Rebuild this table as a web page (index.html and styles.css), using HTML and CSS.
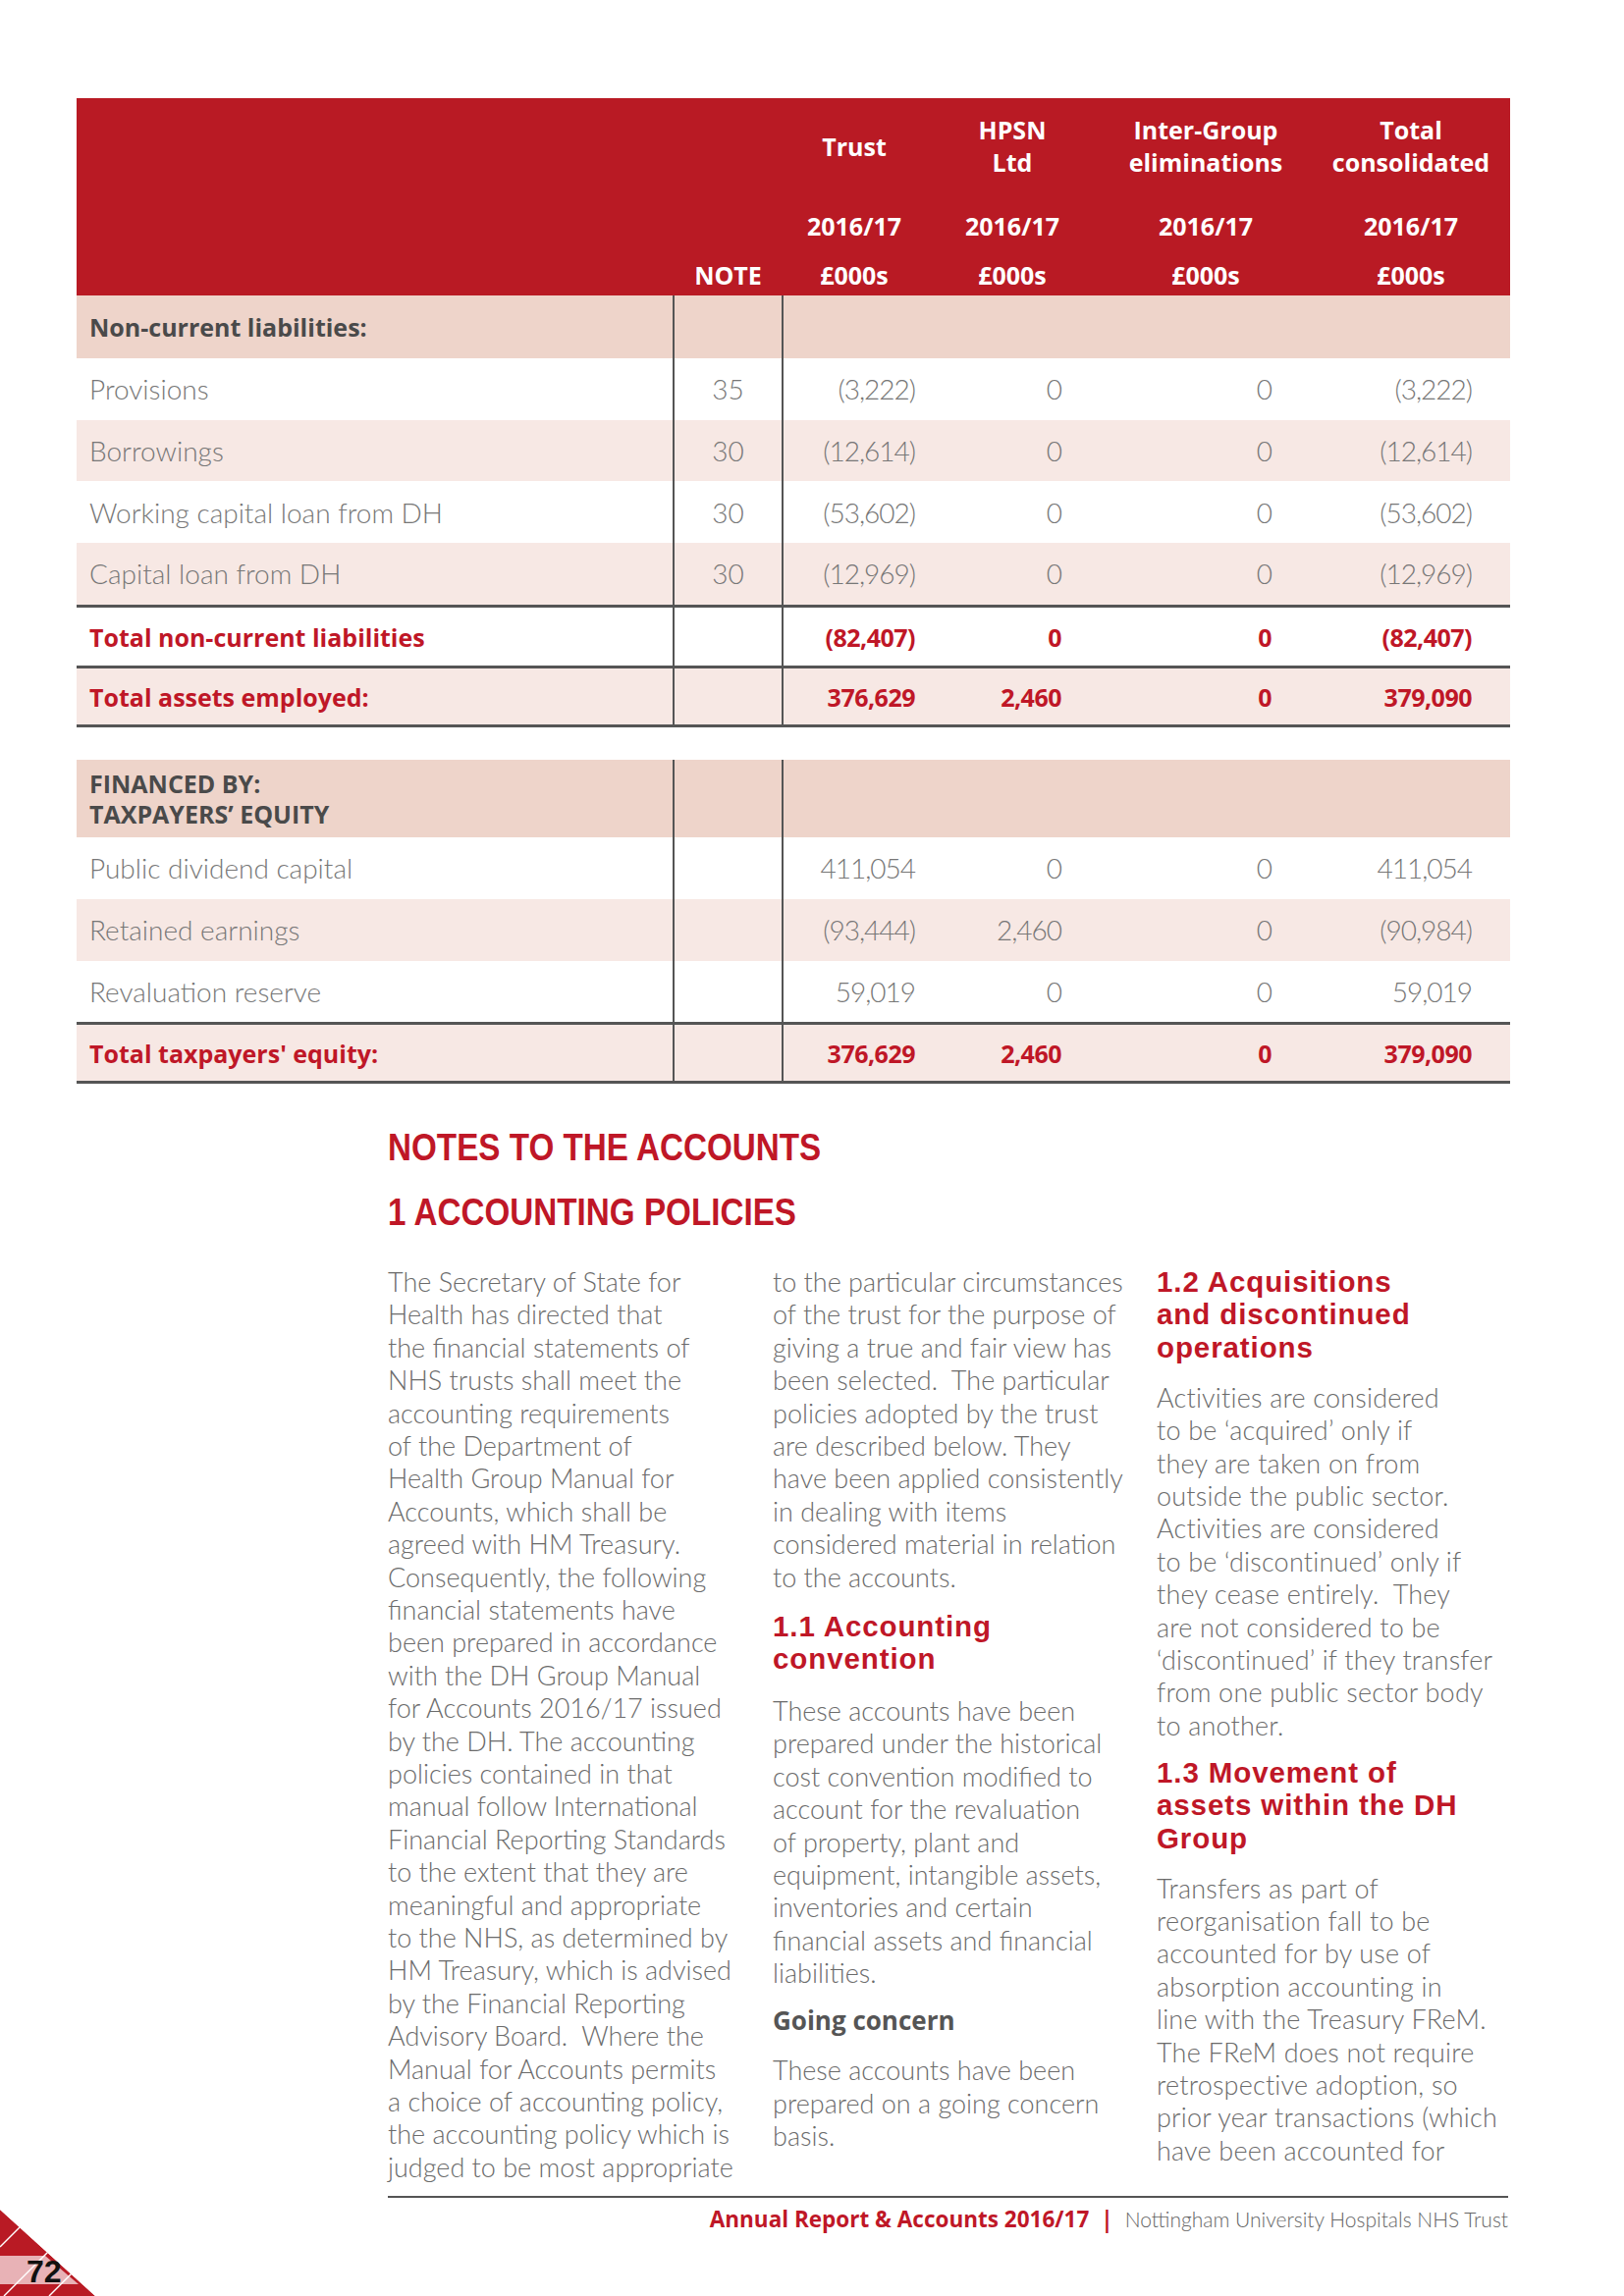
FILE: index.html
```html
<!DOCTYPE html>
<html lang="en">
<head>
<meta charset="utf-8">
<title>Annual Report &amp; Accounts 2016/17 – page 72</title>
<link rel="stylesheet" href="styles.css">
</head>
<body>
<div class="page">
  <section class="fin">
    <div class="thead">
      <div class="th name c3">Trust</div>
      <div class="th name c4">HPSN<br>Ltd</div>
      <div class="th name c5">Inter-Group<br>eliminations</div>
      <div class="th name c6">Total<br>consolidated</div>
      <div class="th yr c3">2016/17</div>
      <div class="th yr c4">2016/17</div>
      <div class="th yr c5">2016/17</div>
      <div class="th yr c6">2016/17</div>
      <div class="th unit c2">NOTE</div>
      <div class="th unit c3">£000s</div>
      <div class="th unit c4">£000s</div>
      <div class="th unit c5">£000s</div>
      <div class="th unit c6">£000s</div>
    </div>

    <div class="tr group"><div class="lbl">Non-current liabilities:</div><div class="note"></div><div></div><div></div><div></div><div></div></div>
    <div class="tr"><div class="lbl">Provisions</div><div class="note">35</div><div class="num n3">(3,222)</div><div class="num n4">0</div><div class="num n5">0</div><div class="num n6">(3,222)</div></div>
    <div class="tr alt"><div class="lbl">Borrowings</div><div class="note">30</div><div class="num n3">(12,614)</div><div class="num n4">0</div><div class="num n5">0</div><div class="num n6">(12,614)</div></div>
    <div class="tr"><div class="lbl">Working capital loan from DH</div><div class="note">30</div><div class="num n3">(53,602)</div><div class="num n4">0</div><div class="num n5">0</div><div class="num n6">(53,602)</div></div>
    <div class="tr alt"><div class="lbl">Capital loan from DH</div><div class="note">30</div><div class="num n3">(12,969)</div><div class="num n4">0</div><div class="num n5">0</div><div class="num n6">(12,969)</div></div>
    <div class="tr total"><div class="lbl">Total non-current liabilities</div><div class="note"></div><div class="num n3">(82,407)</div><div class="num n4">0</div><div class="num n5">0</div><div class="num n6">(82,407)</div></div>
    <div class="tr alt total end"><div class="lbl">Total assets employed:</div><div class="note"></div><div class="num n3">376,629</div><div class="num n4">2,460</div><div class="num n5">0</div><div class="num n6">379,090</div></div>

    <div class="tr group tall"><div class="lbl">FINANCED BY:<br>TAXPAYERS’ EQUITY</div><div class="note"></div><div></div><div></div><div></div><div></div></div>
    <div class="tr"><div class="lbl">Public dividend capital</div><div class="note"></div><div class="num n3">411,054</div><div class="num n4">0</div><div class="num n5">0</div><div class="num n6">411,054</div></div>
    <div class="tr alt"><div class="lbl">Retained earnings</div><div class="note"></div><div class="num n3">(93,444)</div><div class="num n4">2,460</div><div class="num n5">0</div><div class="num n6">(90,984)</div></div>
    <div class="tr"><div class="lbl">Revaluation reserve</div><div class="note"></div><div class="num n3">59,019</div><div class="num n4">0</div><div class="num n5">0</div><div class="num n6">59,019</div></div>
    <div class="tr alt total end"><div class="lbl">Total taxpayers' equity:</div><div class="note"></div><div class="num n3">376,629</div><div class="num n4">2,460</div><div class="num n5">0</div><div class="num n6">379,090</div></div>
  </section>

  <section class="notes">
    <h1 class="title">NOTES TO THE ACCOUNTS</h1>
    <h1 class="title second">1 ACCOUNTING POLICIES</h1>
    <div class="cols">
      <div class="col">
        <p>The Secretary of State for<br>Health has directed that<br>the financial statements of<br>NHS trusts shall meet the<br>accounting requirements<br>of the Department of<br>Health Group Manual for<br>Accounts, which shall be<br>agreed with HM Treasury.<br>Consequently, the following<br>financial statements have<br>been prepared in accordance<br>with the DH Group Manual<br>for Accounts 2016/17 issued<br>by the DH. The accounting<br>policies contained in that<br>manual follow International<br>Financial Reporting Standards<br>to the extent that they are<br>meaningful and appropriate<br>to the NHS, as determined by<br>HM Treasury, which is advised<br>by the Financial Reporting<br>Advisory Board.&nbsp; Where the<br>Manual for Accounts permits<br>a choice of accounting policy,<br>the accounting policy which is<br>judged to be most appropriate</p>
      </div>
      <div class="col">
        <p>to the particular circumstances<br>of the trust for the purpose of<br>giving a true and fair view has<br>been selected.&nbsp; The particular<br>policies adopted by the trust<br>are described below. They<br>have been applied consistently<br>in dealing with items<br>considered material in relation<br>to the accounts.</p>
        <h2 class="sub">1.1 Accounting<br>convention</h2>
        <p>These accounts have been<br>prepared under the historical<br>cost convention modified to<br>account for the revaluation<br>of property, plant and<br>equipment, intangible assets,<br>inventories and certain<br>financial assets and financial<br>liabilities.</p>
        <h3 class="minor">Going concern</h3>
        <p>These accounts have been<br>prepared on a going concern<br>basis.</p>
      </div>
      <div class="col">
        <h2 class="sub first">1.2 Acquisitions<br>and discontinued<br>operations</h2>
        <p class="wide">Activities are considered<br>to be ‘acquired’ only if<br>they are taken on from<br>outside the public sector.<br>Activities are considered<br>to be ‘discontinued’ only if<br>they cease entirely.&nbsp; They<br>are not considered to be<br>‘discontinued’ if they transfer<br>from one public sector body<br>to another.</p>
        <h2 class="sub">1.3 Movement of<br>assets within the DH<br>Group</h2>
        <p class="wide">Transfers as part of<br>reorganisation fall to be<br>accounted for by use of<br>absorption accounting in<br>line with the Treasury FReM.<br>The FReM does not require<br>retrospective adoption, so<br>prior year transactions (which<br>have been accounted for</p>
      </div>
    </div>
    <footer class="foot">
      <span class="foot-red">Annual Report &amp; Accounts 2016/17</span>
      <span class="foot-bar">|</span>
      <span class="foot-grey">Nottingham University Hospitals NHS Trust</span>
    </footer>
  </section>

  <svg class="corner" width="100" height="104" viewBox="0 0 100 104" aria-label="Page 72">
    <defs>
      <clipPath id="tri"><polygon points="0,16 0,104 97,104"/></clipPath>
    </defs>
    <g clip-path="url(#tri)">
      <polygon points="0,16 0,104 97,104" fill="#b91a24"/>
      <polygon points="0,63 46,63 80,92 0,92" fill="#e8b2b6"/>
      <g stroke="#ffffff" stroke-width="1.4">
        <line x1="0" y1="54" x2="30" y2="24"/>
        <line x1="4" y1="104" x2="50" y2="58"/>
        <line x1="50" y1="104" x2="80" y2="74"/>
      </g>
    </g>
    <text class="pgnum" x="27" y="90">72</text>
  </svg>
</div>
</body>
</html>
```

FILE: styles.css
```css
html, body {
  margin: 0;
  padding: 0;
  background: #ffffff;
}

.page {
  position: relative;
  width: 1654px;
  height: 2339px;
  overflow: hidden;
  padding-top: 100px;
  box-sizing: border-box;
  font-family: "Lato", "Open Sans", sans-serif;
}

/* ---------- financial table ---------- */
.fin {
  width: 1460px;
  margin-left: 78px;
}

.thead,
.tr {
  display: grid;
  grid-template-columns: 607px 113px 144px 178px 216px 202px;
}

.thead {
  height: 201px;
  box-sizing: border-box;
  padding-top: 14px;
  grid-template-rows: 70px 62px 55px;
  background: #b91a24;
  color: #ffffff;
  font-family: "Open Sans", "Liberation Sans", sans-serif;
  font-weight: 700;
  font-size: 25px;
}

.th {
  display: flex;
  align-items: center;
  justify-content: center;
  text-align: center;
  line-height: 33px;
}

.th.name { grid-row: 1; }
.th.yr { grid-row: 2; align-self: end; line-height: 30px; margin-bottom: 1px; }
.th.unit { grid-row: 3; align-self: start; margin-top: 19px; line-height: 30px; }
.c2 { grid-column: 2; }
.c3 { grid-column: 3; }
.c4 { grid-column: 4; }
.c5 { grid-column: 5; }
.c6 { grid-column: 6; }

.tr {
  height: 62.7px;
  box-sizing: border-box;
  font-family: "Lato", sans-serif;
  font-weight: 300;
  font-size: 28px;
  color: #777777;
  background: #ffffff;
}

.tr > div {
  display: flex;
  align-items: center;
  height: 100%;
  box-sizing: border-box;
  white-space: nowrap;
}

.lbl { padding-left: 13px; }

.note {
  justify-content: center;
  border-left: 2px solid #555555;
  border-right: 2px solid #555555;
}

.num { justify-content: flex-end; letter-spacing: -1px; }
.n3 { padding-right: 10px; }
.n4 { padding-right: 39px; }
.n5 { padding-right: 41px; }
.n6 { padding-right: 39px; }

.tr.alt { background: #f7e8e4; }

.tr.group {
  height: 64px;
  background: #eed4ca;
  font-family: "Open Sans", "Liberation Sans", sans-serif;
  font-weight: 700;
  font-size: 25px;
  color: #4a4a4a;
  line-height: 31px;
}

.tr.group.tall {
  height: 79px;
  margin-top: 33px;
}

.tr.total {
  border-top: 3px solid #555555;
  font-family: "Open Sans", "Liberation Sans", sans-serif;
  font-weight: 700;
  font-size: 25px;
  color: #bf1727;
}

.tr.total .num { letter-spacing: -0.5px; }
.tr.end { border-bottom: 3px solid #555555; }

/* ---------- notes ---------- */
.notes {
  width: 1143px;
  margin-left: 395px;
}

.title {
  margin: 41px 0 0;
  font-family: "Liberation Sans", "Open Sans", sans-serif;
  font-weight: 700;
  font-size: 39px;
  line-height: 48px;
  color: #bf1727;
  transform: scaleX(0.852);
  transform-origin: left center;
  white-space: nowrap;
}

.title.second { margin-top: 18px; }

.cols {
  display: grid;
  grid-template-columns: 362px 361px 360px;
  column-gap: 30px;
  margin-top: 30px;
}

.col p {
  margin: 0;
  font-family: "Lato", sans-serif;
  font-weight: 300;
  font-size: 27px;
  line-height: 33.4px;
  color: #6b6b6b;
  white-space: nowrap;
}

.col p.wide { letter-spacing: 0.2px; }

.sub {
  margin: 16.6px 0 19.6px;
  font-family: "Liberation Sans", "Open Sans", sans-serif;
  font-weight: 700;
  font-size: 29.5px;
  line-height: 33.4px;
  letter-spacing: 0.9px;
  color: #bf1727;
  white-space: nowrap;
}

.col .sub.first { margin-top: 0; margin-bottom: 17.6px; }
.col p.wide + .sub { margin-top: 14.6px; margin-bottom: 17.6px; }

.minor {
  margin: 15.6px 0 16.6px;
  font-family: "Open Sans", "Liberation Sans", sans-serif;
  font-weight: 700;
  font-size: 26px;
  line-height: 33.4px;
  color: #555555;
}

.foot {
  display: flex;
  justify-content: flex-end;
  align-items: baseline;
  gap: 12px;
  width: 1141px;
  margin-top: 13px;
  padding-top: 9px;
  border-top: 2px solid #555555;
  line-height: 26px;
}

.foot-red,
.foot-bar {
  font-family: "Open Sans", "Liberation Sans", sans-serif;
  font-weight: 700;
  font-size: 22.5px;
  color: #bf1727;
}

.foot-grey {
  font-family: "Lato", sans-serif;
  font-weight: 300;
  font-size: 21px;
  color: #666666;
}

/* ---------- page corner ---------- */
.corner {
  position: absolute;
  left: 0;
  bottom: 0;
}

.pgnum {
  font-family: "Liberation Sans", sans-serif;
  font-weight: 700;
  font-size: 32px;
  fill: #111111;
}
```
